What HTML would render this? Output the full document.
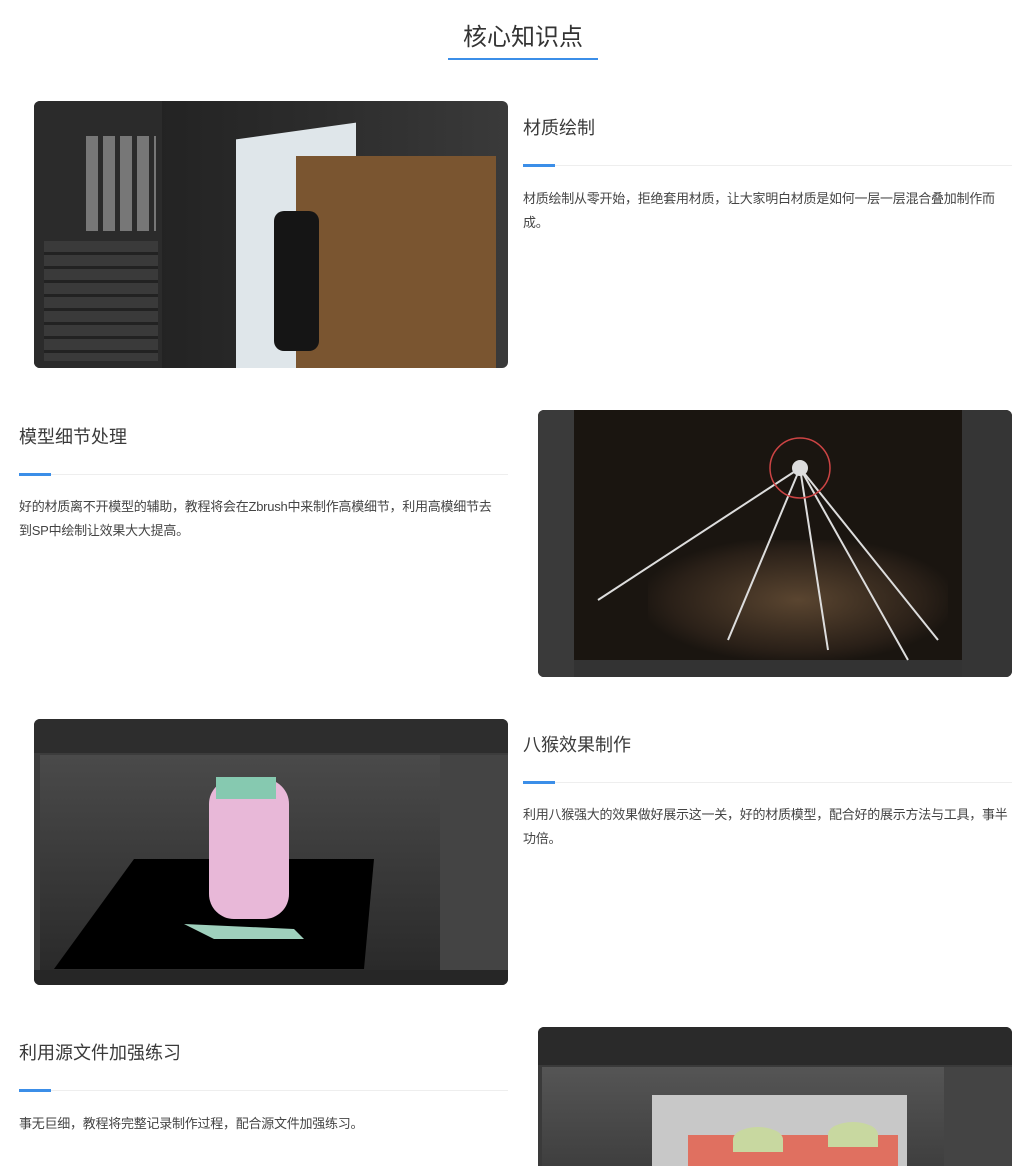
<!DOCTYPE html>
<html><head><meta charset="utf-8"><style>
html,body{margin:0;height:1166px;overflow:hidden}
body{background:#fff;width:1036px;position:relative;font-family:"Liberation Sans","Noto Sans CJK SC",sans-serif;color:#333}
.t{position:absolute;left:448px;width:150px;top:18px;text-align:center;font-size:24px;line-height:40px;color:#333}
.tl{position:absolute;left:448px;top:58px;width:150px;height:2px;background:#3b8ee8}
.h{position:absolute;font-size:18px;color:#3a3a3a;line-height:24px}
.bar{position:absolute;height:1px;background:#eee;width:489px}
.bar:before{content:"";position:absolute;left:0;top:-1px;width:32px;height:3px;background:#3b8ee8}
.p{position:absolute;font-size:13px;line-height:24px;color:#444;width:492px;letter-spacing:-0.25px}
.img{position:absolute;width:474px;border-radius:6px;overflow:hidden}
</style></head><body>
<div class="t">核心知识点</div><div class="tl"></div>

<div class="img" style="left:34px;top:101px;height:267px;background:linear-gradient(90deg,#1c1c1c,#2c2c2c 60%,#3a3a3a)">
 <div style="position:absolute;left:0;top:0;width:128px;height:267px;background:#2b2b2b"></div>
 <div style="position:absolute;left:52px;top:35px;width:70px;height:95px;background:repeating-linear-gradient(90deg,#777 0 12px,#2b2b2b 12px 17px)"></div>
 <div style="position:absolute;left:10px;top:140px;width:114px;height:120px;background:repeating-linear-gradient(#3a3a3a 0 11px,#222 11px 14px)"></div>
 <div style="position:absolute;left:202px;top:30px;width:120px;height:237px;background:#dfe6ea;transform:skewY(-8deg)"></div>
 <div style="position:absolute;left:262px;top:55px;width:200px;height:212px;background:#7a5530"></div>
 <div style="position:absolute;left:240px;top:110px;width:45px;height:140px;background:#151515;border-radius:10px"></div>
</div>
<div class="h" style="left:523px;top:116px">材质绘制</div>
<div class="bar" style="left:523px;top:165px"></div>
<div class="p" style="left:523px;top:187px">材质绘制从零开始，拒绝套用材质，让大家明白材质是如何一层一层混合叠加制作而成。</div>

<div class="h" style="left:19px;top:425px">模型细节处理</div>
<div class="bar" style="left:19px;top:474px"></div>
<div class="p" style="left:19px;top:495px;width:482px">好的材质离不开模型的辅助，教程将会在Zbrush中来制作高模细节，利用高模细节去到SP中绘制让效果大大提高。</div>
<div class="img" style="left:538px;top:410px;height:267px;background:#1a1510">
 <div style="position:absolute;left:0;top:0;width:36px;height:267px;background:#3a3a3a"></div>
 <div style="position:absolute;right:0;top:0;width:50px;height:267px;background:#353535"></div>
 <div style="position:absolute;left:36px;top:250px;width:388px;height:17px;background:#333"></div>
 <div style="position:absolute;left:110px;top:130px;width:300px;height:120px;background:radial-gradient(ellipse at 50% 50%,#5a4530,#2a2018 60%,transparent 75%)"></div>
 <svg style="position:absolute;left:0;top:0" width="474" height="267"><g stroke="#ddd" stroke-width="2"><line x1="262" y1="58" x2="60" y2="190"/><line x1="262" y1="58" x2="190" y2="230"/><line x1="262" y1="58" x2="290" y2="240"/><line x1="262" y1="58" x2="370" y2="250"/><line x1="262" y1="58" x2="400" y2="230"/></g><circle cx="262" cy="58" r="30" fill="none" stroke="#c44" stroke-width="1.5"/><circle cx="262" cy="58" r="8" fill="#ddd"/></svg>
</div>

<div class="img" style="left:34px;top:719px;height:266px;background:#3c3c3c">
 <div style="position:absolute;left:0;top:0;width:474px;height:34px;background:#2d2d2d"></div>
 <div style="position:absolute;left:6px;top:36px;width:400px;height:215px;background:linear-gradient(#4a4a4a,#2a2a2a)"></div>
 <svg style="position:absolute;left:0;top:0" width="474" height="266"><polygon points="100,140 340,140 330,250 20,250" fill="#000"/><rect x="175" y="60" width="80" height="140" rx="25" fill="#e8b8d8"/><rect x="182" y="58" width="60" height="22" fill="#86c9b0"/><path d="M150,205 L260,210 L270,220 L180,220Z" fill="#9fd0bd"/></svg>
 <div style="position:absolute;left:406px;top:36px;width:68px;height:215px;background:#444"></div>
 <div style="position:absolute;left:0;top:251px;width:474px;height:15px;background:#262626"></div>
</div>
<div class="h" style="left:523px;top:733px">八猴效果制作</div>
<div class="bar" style="left:523px;top:782px"></div>
<div class="p" style="left:523px;top:803px">利用八猴强大的效果做好展示这一关，好的材质模型，配合好的展示方法与工具，事半功倍。</div>

<div class="h" style="left:19px;top:1041px">利用源文件加强练习</div>
<div class="bar" style="left:19px;top:1090px"></div>
<div class="p" style="left:19px;top:1112px">事无巨细，教程将完整记录制作过程，配合源文件加强练习。</div>
<div class="img" style="left:538px;top:1027px;height:160px;background:#3a3a3a">
 <div style="position:absolute;left:0;top:0;width:474px;height:38px;background:#2a2a2a"></div>
 <div style="position:absolute;left:4px;top:40px;width:402px;height:120px;background:linear-gradient(#555,#3a3a3a)"></div>
 <div style="position:absolute;left:114px;top:68px;width:255px;height:80px;background:#c8c8c8"></div>
 <div style="position:absolute;left:150px;top:108px;width:210px;height:40px;background:#e07060"></div>
 <div style="position:absolute;left:195px;top:100px;width:50px;height:25px;border-radius:50% 50% 0 0;background:#c8d8a0"></div>
 <div style="position:absolute;left:290px;top:95px;width:50px;height:25px;border-radius:50% 50% 0 0;background:#c8d8a0"></div>
 <div style="position:absolute;left:406px;top:40px;width:68px;height:120px;background:#444"></div>
</div>
</body></html>
